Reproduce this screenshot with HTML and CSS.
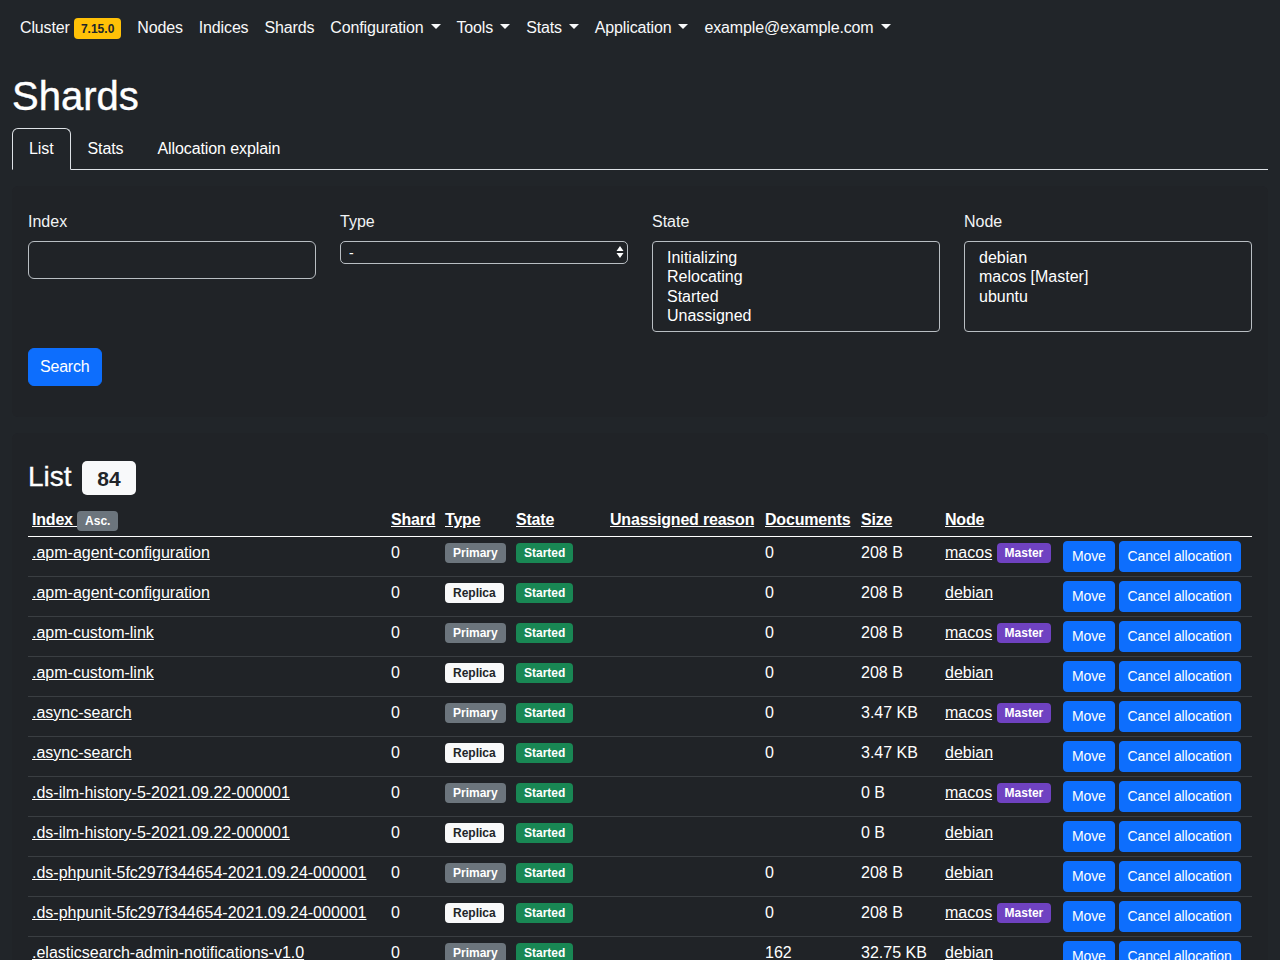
FILE: index.html
```html
<!DOCTYPE html>
<html lang="en">
<head>
<meta charset="utf-8">
<title>Shards</title>
<link rel="stylesheet" href="styles.css">
</head>
<body>
<nav class="navbar">
  <ul class="nav-list">
    <li><a class="nav-link" href="#">Cluster <span class="badge badge-warning">7.15.0</span></a></li>
    <li><a class="nav-link" href="#">Nodes</a></li>
    <li><a class="nav-link" href="#">Indices</a></li>
    <li><a class="nav-link" href="#">Shards</a></li>
    <li><a class="nav-link dropdown-toggle" href="#">Configuration</a></li>
    <li><a class="nav-link dropdown-toggle" href="#">Tools</a></li>
    <li><a class="nav-link dropdown-toggle" href="#">Stats</a></li>
    <li><a class="nav-link dropdown-toggle" href="#">Application</a></li>
    <li><a class="nav-link dropdown-toggle" href="#">example@example.com</a></li>
  </ul>
</nav>

<main class="container">
  <h1 class="page-title">Shards</h1>
  <ul class="tabs">
    <li><a class="tab active" href="#">List</a></li>
    <li><a class="tab" href="#">Stats</a></li>
    <li><a class="tab" href="#">Allocation explain</a></li>
  </ul>

  <section class="card filter-card">
    <form class="filter-form">
      <div class="filter-grid">
        <div class="field">
          <label class="field-label">Index</label>
          <input class="form-control" type="text">
        </div>
        <div class="field">
          <label class="field-label">Type</label>
          <div class="select-wrap">
            <select class="native-select"><option>-</option></select>
            <svg class="select-arrows" width="8" height="14" viewBox="0 0 8 14"><path d="M4 1 L7.5 6 H0.5 Z M4 13 L7.5 8 H0.5 Z" fill="#fff"/></svg>
          </div>
        </div>
        <div class="field">
          <label class="field-label">State</label>
          <div class="multi-select">
            <div class="opt">Initializing</div>
            <div class="opt">Relocating</div>
            <div class="opt">Started</div>
            <div class="opt">Unassigned</div>
          </div>
        </div>
        <div class="field">
          <label class="field-label">Node</label>
          <div class="multi-select">
            <div class="opt">debian</div>
            <div class="opt">macos [Master]</div>
            <div class="opt">ubuntu</div>
          </div>
        </div>
      </div>
      <button class="btn btn-primary" type="button">Search</button>
    </form>
  </section>

  <section class="card list-card">
    <h3 class="list-title">List <span class="badge badge-light">84</span></h3>
    <table class="shards-table">
      <colgroup>
        <col class="c-index"><col class="c-shard"><col class="c-type"><col class="c-state"><col class="c-reason"><col class="c-docs"><col class="c-size"><col class="c-node"><col class="c-actions">
      </colgroup>
      <thead>
        <tr>
          <th><a href="#">Index <span class="badge badge-secondary">Asc.</span></a></th>
          <th><a href="#">Shard</a></th>
          <th><a href="#">Type</a></th>
          <th><a href="#">State</a></th>
          <th><a href="#">Unassigned reason</a></th>
          <th><a href="#">Documents</a></th>
          <th><a href="#">Size</a></th>
          <th><a href="#">Node</a></th>
          <th></th>
        </tr>
      </thead>
      <tbody>
        <tr>
          <td><a href="#">.apm-agent-configuration</a></td><td>0</td>
          <td><span class="badge badge-secondary">Primary</span></td><td><span class="badge badge-success">Started</span></td>
          <td></td><td>0</td><td>208 B</td>
          <td><a href="#">macos</a> <span class="badge badge-purple">Master</span></td>
          <td class="actions"><button class="btn btn-sm">Move</button> <button class="btn btn-sm">Cancel allocation</button></td>
        </tr>
        <tr>
          <td><a href="#">.apm-agent-configuration</a></td><td>0</td>
          <td><span class="badge badge-light">Replica</span></td><td><span class="badge badge-success">Started</span></td>
          <td></td><td>0</td><td>208 B</td>
          <td><a href="#">debian</a></td>
          <td class="actions"><button class="btn btn-sm">Move</button> <button class="btn btn-sm">Cancel allocation</button></td>
        </tr>
        <tr>
          <td><a href="#">.apm-custom-link</a></td><td>0</td>
          <td><span class="badge badge-secondary">Primary</span></td><td><span class="badge badge-success">Started</span></td>
          <td></td><td>0</td><td>208 B</td>
          <td><a href="#">macos</a> <span class="badge badge-purple">Master</span></td>
          <td class="actions"><button class="btn btn-sm">Move</button> <button class="btn btn-sm">Cancel allocation</button></td>
        </tr>
        <tr>
          <td><a href="#">.apm-custom-link</a></td><td>0</td>
          <td><span class="badge badge-light">Replica</span></td><td><span class="badge badge-success">Started</span></td>
          <td></td><td>0</td><td>208 B</td>
          <td><a href="#">debian</a></td>
          <td class="actions"><button class="btn btn-sm">Move</button> <button class="btn btn-sm">Cancel allocation</button></td>
        </tr>
        <tr>
          <td><a href="#">.async-search</a></td><td>0</td>
          <td><span class="badge badge-secondary">Primary</span></td><td><span class="badge badge-success">Started</span></td>
          <td></td><td>0</td><td>3.47 KB</td>
          <td><a href="#">macos</a> <span class="badge badge-purple">Master</span></td>
          <td class="actions"><button class="btn btn-sm">Move</button> <button class="btn btn-sm">Cancel allocation</button></td>
        </tr>
        <tr>
          <td><a href="#">.async-search</a></td><td>0</td>
          <td><span class="badge badge-light">Replica</span></td><td><span class="badge badge-success">Started</span></td>
          <td></td><td>0</td><td>3.47 KB</td>
          <td><a href="#">debian</a></td>
          <td class="actions"><button class="btn btn-sm">Move</button> <button class="btn btn-sm">Cancel allocation</button></td>
        </tr>
        <tr>
          <td><a href="#">.ds-ilm-history-5-2021.09.22-000001</a></td><td>0</td>
          <td><span class="badge badge-secondary">Primary</span></td><td><span class="badge badge-success">Started</span></td>
          <td></td><td></td><td>0 B</td>
          <td><a href="#">macos</a> <span class="badge badge-purple">Master</span></td>
          <td class="actions"><button class="btn btn-sm">Move</button> <button class="btn btn-sm">Cancel allocation</button></td>
        </tr>
        <tr>
          <td><a href="#">.ds-ilm-history-5-2021.09.22-000001</a></td><td>0</td>
          <td><span class="badge badge-light">Replica</span></td><td><span class="badge badge-success">Started</span></td>
          <td></td><td></td><td>0 B</td>
          <td><a href="#">debian</a></td>
          <td class="actions"><button class="btn btn-sm">Move</button> <button class="btn btn-sm">Cancel allocation</button></td>
        </tr>
        <tr>
          <td><a href="#">.ds-phpunit-5fc297f344654-2021.09.24-000001</a></td><td>0</td>
          <td><span class="badge badge-secondary">Primary</span></td><td><span class="badge badge-success">Started</span></td>
          <td></td><td>0</td><td>208 B</td>
          <td><a href="#">debian</a></td>
          <td class="actions"><button class="btn btn-sm">Move</button> <button class="btn btn-sm">Cancel allocation</button></td>
        </tr>
        <tr>
          <td><a href="#">.ds-phpunit-5fc297f344654-2021.09.24-000001</a></td><td>0</td>
          <td><span class="badge badge-light">Replica</span></td><td><span class="badge badge-success">Started</span></td>
          <td></td><td>0</td><td>208 B</td>
          <td><a href="#">macos</a> <span class="badge badge-purple">Master</span></td>
          <td class="actions"><button class="btn btn-sm">Move</button> <button class="btn btn-sm">Cancel allocation</button></td>
        </tr>
        <tr>
          <td><a href="#">.elasticsearch-admin-notifications-v1.0</a></td><td>0</td>
          <td><span class="badge badge-secondary">Primary</span></td><td><span class="badge badge-success">Started</span></td>
          <td></td><td>162</td><td>32.75 KB</td>
          <td><a href="#">debian</a></td>
          <td class="actions"><button class="btn btn-sm">Move</button> <button class="btn btn-sm">Cancel allocation</button></td>
        </tr>
      </tbody>
    </table>
  </section>
</main>
</body>
</html>
```

FILE: styles.css
```css
* { box-sizing: border-box; }

html, body {
  margin: 0;
  padding: 0;
  background: #212529;
  color: #e9ecef;
  font-family: "Liberation Sans", Arial, sans-serif;
  font-size: 16px;
  line-height: 24px;
}

a { color: #fff; }

/* Navbar */
.navbar {
  padding: 8px 12px;
  height: 56px;
}
.nav-list {
  list-style: none;
  margin: 0;
  padding: 0;
  display: flex;
}
.nav-link {
  display: block;
  padding: 8px;
  color: #f8f9fa;
  text-decoration: none;
  white-space: nowrap;
  letter-spacing: -0.15px;
}
.dropdown-toggle::after {
  content: "";
  display: inline-block;
  margin-left: 7px;
  vertical-align: 4px;
  border-top: 5px solid #f8f9fa;
  border-left: 5px solid transparent;
  border-right: 5px solid transparent;
}

/* Badges */
.badge {
  display: inline-block;
  font-size: 12px;
  font-weight: 700;
  line-height: 1;
  padding: 4px 8px 4px;
  border-radius: 4px;
  vertical-align: baseline;
  white-space: nowrap;
  text-decoration: none;
  letter-spacing: 0;
}
.badge-warning { background: #ffc107; color: #212529; padding: 5px 7px 4px; margin-left: 0; }
.badge-light { background: #f8f9fa; color: #212529; }
.badge-secondary { background: #6c757d; color: #fff; }
.badge-success { background: #198754; color: #fff; }
.badge-purple { background: #6f42c1; color: #fff; }

/* Container */
.container {
  padding: 0 12px;
}
.page-title {
  margin: 16px 0 8px;
  font-size: 40px;
  line-height: 48px;
  font-weight: 500;
  color: #fff;
  -webkit-text-stroke: 0.4px #fff;
}

/* Tabs */
.tabs {
  list-style: none;
  margin: 0;
  padding: 0;
  display: flex;
  border-bottom: 1px solid #dee2e6;
}
.tab {
  display: block;
  padding: 8px 16px;
  margin-bottom: -1px;
  border: 1px solid transparent;
  border-radius: 6px 6px 0 0;
  color: #fff;
  text-decoration: none;
  letter-spacing: -0.1px;
}
.tab.active {
  border-color: #dee2e6 #dee2e6 #212529;
  background: #212529;
}

/* Cards */
.card {
  background: #202327;
  border-radius: 6px;
}
.filter-card {
  margin-top: 16px;
  padding: 24px 16px 31px;
}
.filter-grid {
  display: grid;
  grid-template-columns: repeat(4, 1fr);
  column-gap: 24px;
  align-items: start;
  margin-bottom: 16px;
}
.field-label {
  display: block;
  margin-bottom: 7px;
  color: #f1f3f5;
}
.form-control {
  display: block;
  width: 100%;
  height: 38px;
  padding: 6px 12px;
  font: inherit;
  color: #fff;
  background: transparent;
  border: 1px solid #b9bec3;
  border-radius: 6px;
}
.select-wrap {
  position: relative;
  height: 23px;
}
.native-select {
  -webkit-appearance: none;
  appearance: none;
  display: block;
  width: 100%;
  height: 23px;
  padding: 0 8px;
  font-family: "Liberation Sans", Arial, sans-serif;
  font-size: 14px;
  color: #fff;
  background: transparent;
  border: 1px solid #b9bec3;
  border-radius: 5px;
}
.select-arrows {
  position: absolute;
  right: 4px;
  top: 4px;
}
.multi-select {
  height: 91px;
  padding: 6px 14px;
  border: 1px solid #b9bec3;
  border-radius: 4px;
  color: #fff;
}
.opt {
  line-height: 19.4px;
}

.btn {
  display: inline-block;
  font-family: "Liberation Sans", Arial, sans-serif;
  font-size: 16px;
  line-height: 24px;
  padding: 6px 12px;
  color: #fff;
  background: #0d6efd;
  border: 1px solid #0d6efd;
  border-radius: 6px;
  cursor: pointer;
}
.btn-primary {
  padding: 6px 11px;
  letter-spacing: -0.2px;
}
.btn-sm {
  font-size: 14px;
  line-height: 21px;
  padding: 4px 8px;
  border-radius: 4px;
  letter-spacing: -0.15px;
}

/* List */
.list-card {
  margin-top: 16px;
  padding: 27px 16px 16px;
}
.list-title {
  margin: 0 0 9px;
  font-size: 28px;
  line-height: 34px;
  font-weight: 500;
  color: #fff;
  -webkit-text-stroke: 0.3px #fff;
}
.list-title .badge {
  font-size: 21px;
  padding: 7px 15px 6px;
  border-radius: 5px;
  vertical-align: 0;
  margin-left: 3px;
  -webkit-text-stroke: 0;
}

.shards-table {
  width: 100%;
  border-collapse: collapse;
  table-layout: fixed;
  color: #fff;
}
.c-index { width: 359px; }
.c-shard { width: 54px; }
.c-type { width: 71px; }
.c-state { width: 94px; }
.c-reason { width: 155px; }
.c-docs { width: 96px; }
.c-size { width: 84px; }
.c-node { width: 118px; }
.c-actions { width: 193px; }

.shards-table th,
.shards-table td {
  padding: 4px;
  text-align: left;
  vertical-align: top;
  white-space: nowrap;
}
.shards-table th {
  font-weight: 700;
  border-bottom: 1px solid #fff;
  letter-spacing: -0.2px;
}
.shards-table td {
  border-bottom: 1px solid #3a3e42;
}
.shards-table td .badge {
  vertical-align: 1px;
}
.shards-table td.actions {
  font-size: 14px;
}
```
